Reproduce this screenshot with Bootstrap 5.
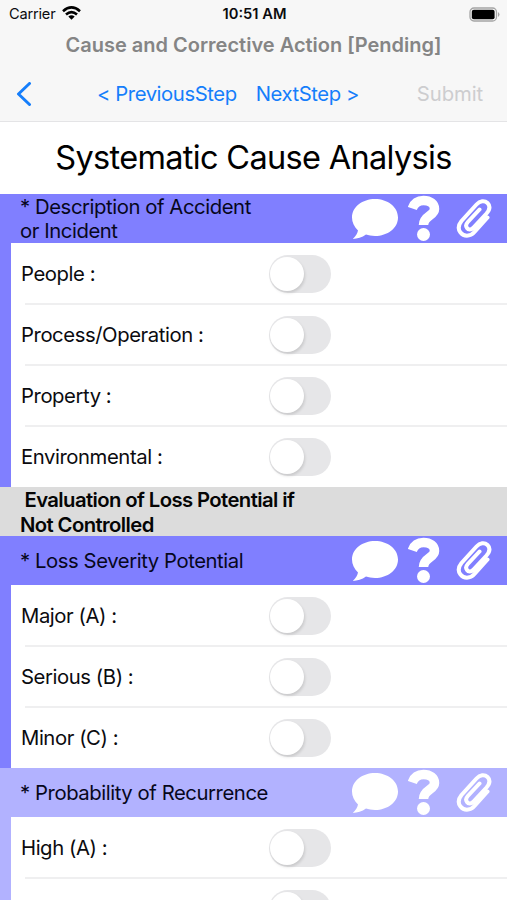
<!DOCTYPE html>
<html lang="en">
<head>
<meta charset="utf-8">
<meta name="viewport" content="width=device-width, initial-scale=1">
<title>Systematic Cause Analysis</title>
<link href="https://cdn.jsdelivr.net/npm/bootstrap@5.3.0/dist/css/bootstrap.min.css" rel="stylesheet">
<style>
body{font-family:Inter,"Liberation Sans",sans-serif;color:#0b0b0f;font-size:20.3px;line-height:24.5px;height:900px;white-space:nowrap;letter-spacing:-.43px}
.topbar{height:122px;background:#f7f7f7;border-bottom:1px solid #e4e4e6}
.status{height:27px;font-size:14.6px;line-height:27px;padding:1px 7px 0 9px;display:grid;grid-template-columns:1fr auto 1fr;letter-spacing:0}
.carrier{letter-spacing:-.2px}
.wifi{margin:-3px 0 0 7px}
.clock{font-weight:600;font-size:14.7px}
.doc-title{height:36px;line-height:36px;font-size:20px;font-weight:600;color:#858585;letter-spacing:0}
.actions{height:58px;padding:4px 24px 0 16px}
.actions a{color:#157efb;text-decoration:none}
.prev{margin-left:65px}.next{margin-left:19px}
.off{color:#cdcdcf;margin-left:auto;letter-spacing:-.1px}
.page-title{height:72px;line-height:72px;font-size:32.5px;color:#000;font-weight:400;letter-spacing:-.68px}
.sec{height:49px;background:#807fff;padding:0 15px 0 20px;color:#07071c}
.sec .name{padding-top:1px}
.pale .sec{background:#b2b2ff}
.rows{border-left:11px solid #807fff}
.pale .rows{border-color:#b2b2ff}
.opt{height:61px;padding-left:10px;position:relative}
.opt + .opt::before{content:"";position:absolute;left:14px;right:0;top:-1px;height:2px;background:#efeff0}
.opt .txt{width:248px;padding-top:2px}
.toggle{width:62px;height:38px;border-radius:19px;background:#e6e6e8;border:0;padding:2px 1px}
.knob{display:block;width:34px;height:34px;border-radius:50%;background:#fff;box-shadow:1px 2px 3px rgba(0,0,0,.13)}
.note{height:49px;background:#dcdcdc;padding:1px 0 0 20px;font-weight:600;color:#050505;white-space:pre;letter-spacing:-.6px}
.ask-icon{margin-left:10px}.clip-icon{margin-left:14px}
</style>
</head>
<body class="bg-white overflow-hidden">
<svg class="d-none">
<symbol id="bubble" viewBox="0 0 46 42"><path d="M23 1C35.5 1 46 8.800 46 19.500S35.500 38 23 38C19.500 38 16.500 37.400 14 36.600C10 39.600 5.300 40.900.8 40.900C4 38 5.300 35.500 6 32.500C2 28.700 0 24 0 19.500C0 8.800 10.500 1 23 1Z" fill="#fff"/></symbol>
<symbol id="ask" viewBox="0 0 34 47"><path d="M4.300 13.500C6 8.500 10 5.500 15.500 5.500C22 5.500 26.500 9 26.500 14C26.500 21 15.500 20.500 15.500 30" fill="none" stroke="#fff" stroke-width="9.500"/><circle cx="15.500" cy="39.500" r="6.500" fill="#fff"/></symbol>
<symbol id="clip" viewBox="0 0 36 42"><path d="M31.500 19.500L18.500 34C14 39 7.500 38.500 4.500 34.500C1.800 31 2.300 27 5.500 23L20.500 6.500C24 2.700 28.500 2.200 31.500 5C34.500 8 33.500 12 30.500 15.500L17 30C15 32 12.300 31.800 11 30C9.500 28.100 10 26 11.800 24L23.500 11.500" fill="none" stroke="#fff" stroke-width="4" stroke-linecap="round" stroke-linejoin="round"/></symbol>
</svg>
<header class="topbar">
<div class="status">
<div class="d-flex align-items-center"><span class="carrier">Carrier</span><svg class="wifi" width="19" height="14" viewBox="0 0 19 14"><g fill="none" stroke="#000" stroke-width="2.600"><path d="M1 5.200Q9.500-2.400 18 5.200"/><path d="M4 8.500Q9.500 3.600 15 8.500"/></g><path d="M6.300 10.600Q9.500 7.900 12.700 10.600L9.500 13.800Z"/></svg></div>
<span class="clock">10:51 AM</span>
<div class="d-flex align-items-center justify-content-end"><svg width="31" height="16" viewBox="0 0 31 16"><rect x="1" y="1" width="26.500" height="13" rx="4" fill="#f7f7f7" stroke="#a5a5a5" stroke-width="1.300"/><rect x="2.800" y="2.800" width="22.800" height="9.400" rx="2" fill="#000"/><path d="M29 5.100Q32 7.500 29 10Z" fill="#a5a5a5"/></svg></div>
</div>
<div class="doc-title text-center">Cause and Corrective Action [Pending]</div>
<nav class="actions d-flex align-items-center">
<a href="#" class="d-flex" aria-label="Back"><svg width="16" height="24" viewBox="0 0 16 24"><path d="M13.500 1.500L2.500 12L13.500 22.500" fill="none" stroke="#157efb" stroke-width="3" stroke-linecap="round" stroke-linejoin="round"/></svg></a>
<a href="#" class="prev">&lt; PreviousStep</a><a href="#" class="next">NextStep &gt;</a><span class="off">Submit</span>
</nav>
</header>
<h1 class="page-title text-center m-0">Systematic Cause Analysis</h1>
<main id="form"></main>
<script src="https://cdn.jsdelivr.net/npm/bootstrap@5.3.0/dist/js/bootstrap.bundle.min.js"></script>
<script>
const icons='<div class="d-flex align-items-center flex-shrink-0"><svg width="46" height="42"><use href="#bubble"/></svg><svg class="ask-icon" width="34" height="47"><use href="#ask"/></svg><svg class="clip-icon" width="36" height="42"><use href="#clip"/></svg></div>';
const section=(title,opts,cls='')=>`<section class="${cls}"><div class="sec d-flex align-items-center justify-content-between"><span class="name">${title}</span>${icons}</div><div class="rows">${opts.map(o=>`<div class="opt d-flex align-items-center"><span class="txt">${o&&o+' :'}</span><button class="toggle" type="button" role="switch" aria-checked="false"><span class="knob"></span></button></div>`).join('')}</div></section>`;
document.getElementById('form').innerHTML=
section('* Description of Accident<br>or Incident',['People','Process/Operation','Property','Environmental'])+
'<div class="note"> Evaluation of Loss Potential if\nNot Controlled</div>'+
section('* Loss Severity Potential',['Major (A)','Serious (B)','Minor (C)'])+
section('* Probability of Recurrence',['High (A)',''],'pale');
</script>
</body>
</html>
